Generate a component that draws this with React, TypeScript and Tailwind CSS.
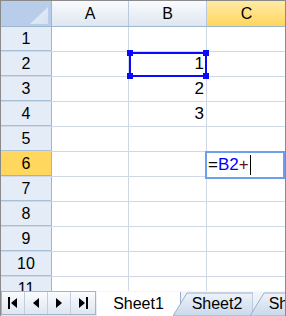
import React from "react";

const rows = [1, 2, 3, 4, 5, 6, 7, 8, 9, 10, 11];

function Cell({ w, children, last }: { w: string; children?: React.ReactNode; last?: boolean }) {
  return (
    <div className={`${w} shrink-0 h-full ${last ? "" : "border-r border-[#d0d7e5]"} flex items-center justify-end pr-[2px] text-[17px] text-black`}>
      {children}
    </div>
  );
}

function Tab({ label, shift }: { label: string; shift: string }) {
  return (
    <div className={`relative shrink-0 h-[24px] w-[80px] ${shift} flex items-center justify-center`}>
      <svg className="absolute inset-0" width="100%" height="24" viewBox="0 0 80 24" preserveAspectRatio="none">
        <defs>
          <linearGradient id={`g-${label}`} x1="0" y1="0" x2="0" y2="1">
            <stop offset="0" stopColor="#eef3fa" />
            <stop offset="1" stopColor="#c9d8ec" />
          </linearGradient>
        </defs>
        <path d="M0 24 L14 1 L80 1 L80 24 Z" fill={`url(#g-${label})`} stroke="#9aaec9" strokeWidth="1" />
      </svg>
      <span className="relative pl-[8px] text-[16px] text-black">{label}</span>
    </div>
  );
}

export default function App() {
  return (
    <div
      className="relative w-[286px] h-[316px] overflow-hidden bg-white border-l border-t border-[#8a8a8a]"
      style={{ fontFamily: '"Liberation Sans", Arial, sans-serif' }}
    >
      {/* header row */}
      <div className="flex h-[26px] border-b border-[#9eb6ce]">
        <div className="relative w-[51px] shrink-0 h-full border-r border-[#9eb6ce] bg-[#b7cde9]">
          <svg className="absolute right-[3px] bottom-[2px]" width="18" height="17" viewBox="0 0 18 17">
            <defs>
              <linearGradient id="tri" x1="0" y1="0" x2="1" y2="1">
                <stop offset="0" stopColor="#e9f0f9" />
                <stop offset="1" stopColor="#d4e1f2" />
              </linearGradient>
            </defs>
            <path d="M18 0 L18 17 L0 17 Z" fill="url(#tri)" />
          </svg>
        </div>
        <div className="w-[77px] shrink-0 h-full border-r border-[#b8c9de] bg-gradient-to-b from-[#f9fbfd] to-[#dee6f0] flex items-center justify-center text-[16px] text-black">
          A
        </div>
        <div className="w-[78px] shrink-0 h-full border-r border-[#b8c9de] bg-gradient-to-b from-[#f9fbfd] to-[#dee6f0] flex items-center justify-center text-[16px] text-black">
          B
        </div>
        <div className="flex-1 h-full bg-gradient-to-b from-[#ffeba5] to-[#ffd55a] flex items-center justify-center text-[16px] text-black">
          C
        </div>
      </div>

      {rows.map((r) => (
        <div key={r} className="flex h-[25px] border-b border-[#d0d7e5]">
          <div
            className={`w-[51px] shrink-0 h-full border-r border-[#9eb6ce] flex items-center justify-center text-[16px] text-black ${
              r === 6 ? "bg-[#ffd75e] -mb-px border-b border-b-[#c6b165]" : "bg-[#e4ecf7] -mb-px border-b border-b-[#a9bfd6]"
            }`}
          >
            {r}
          </div>
          <Cell w="w-[77px]" />
          <Cell w="w-[78px]">{r === 2 ? "1" : r === 3 ? "2" : r === 4 ? "3" : null}</Cell>
          <div className="flex-1 h-full" />
        </div>
      ))}

      {/* selection B2 */}
      <div className="absolute left-[128px] top-[51px] w-[78px] h-[25px] border-2 border-[#0a0aff] pointer-events-none">
        <div className="absolute -left-[4px] -top-[4px] w-[6px] h-[6px] bg-[#0a0aff]" />
        <div className="absolute -right-[4px] -top-[4px] w-[6px] h-[6px] bg-[#0a0aff]" />
        <div className="absolute -left-[4px] -bottom-[4px] w-[6px] h-[6px] bg-[#0a0aff]" />
        <div className="absolute -right-[4px] -bottom-[4px] w-[6px] h-[6px] bg-[#0a0aff]" />
      </div>

      {/* editor C6 */}
      <div className="absolute left-[204px] top-[150px] w-[80px] h-[28px] border-2 border-[#6b9ff0] bg-white flex items-center pl-[1px] text-[17px]">
        <span className="text-black">=</span>
        <span className="text-[#0000ff]">B2</span>
        <span className="text-[#6a1010]">+</span>
        <span className="ml-[1px] w-px h-[20px] bg-black" />
      </div>
      <div className="absolute left-[284px] top-[176px] w-[2px] h-[3px] bg-black" />

      {/* tab bar */}
      <div className="absolute left-0 right-0 bottom-0 h-[25px] flex items-end bg-gradient-to-b from-[#f3f6fb] to-[#dfe7f2]">
        <div className="w-[95px] shrink-0 h-[24px] mb-[1px] border border-[#a5b5c8] bg-gradient-to-b from-[#fafcfe] to-[#dde6f1] flex items-center">
          <div className="w-[23px] h-full flex items-center justify-center border-r border-[#c2cedd]">
            <svg width="10" height="12" viewBox="0 0 10 12"><rect x="0" y="0" width="2" height="12" fill="#000" /><path d="M9 1 L3 6 L9 11 Z" fill="#000" /></svg>
          </div>
          <div className="w-[23px] h-full flex items-center justify-center border-r border-[#c2cedd]">
            <svg width="8" height="12" viewBox="0 0 8 12"><path d="M7 1 L1 6 L7 11 Z" fill="#000" /></svg>
          </div>
          <div className="w-[23px] h-full flex items-center justify-center border-r border-[#c2cedd]">
            <svg width="8" height="12" viewBox="0 0 8 12"><path d="M1 1 L7 6 L1 11 Z" fill="#000" /></svg>
          </div>
          <div className="flex-1 h-full flex items-center justify-center">
            <svg width="10" height="12" viewBox="0 0 10 12"><path d="M1 1 L7 6 L1 11 Z" fill="#000" /><rect x="8" y="0" width="2" height="12" fill="#000" /></svg>
          </div>
        </div>
        <div className="flex items-end h-[24px] ml-[1px]">
          <div className="relative shrink-0 h-[24px] w-[84px] flex items-center justify-center bg-white border-r border-[#9aaec9]">
            <span className="text-[16px] text-black">Sheet1</span>
          </div>
          <Tab label="Sheet2" shift="-ml-[8px]" />
          <Tab label="Sheet3" shift="-ml-[3px]" />
        </div>
      </div>
      <div className="absolute right-0 top-0 bottom-0 w-px bg-[#8a8a8a]" />
    </div>
  );
}
